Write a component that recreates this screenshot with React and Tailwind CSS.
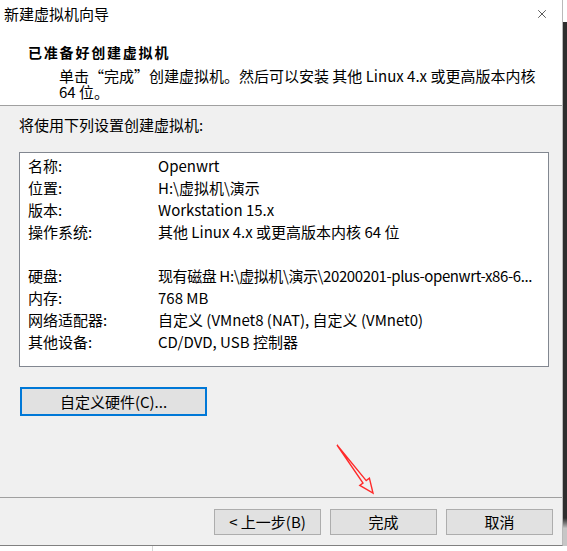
import { X } from 'lucide-react';

const rows = [
  ['名称:', 'Openwrt'],
  ['位置:', 'H:\\虚拟机\\演示'],
  ['版本:', 'Workstation 15.x'],
  ['操作系统:', '其他 Linux 4.x 或更高版本内核 64 位'],
  ['', ''],
  ['硬盘:', '现有磁盘 H:\\虚拟机\\演示\\20200201-plus-openwrt-x86-6...', true],
  ['内存:', '768 MB'],
  ['网络适配器:', '自定义 (VMnet8 (NAT), 自定义 (VMnet0)'],
  ['其他设备:', 'CD/DVD, USB 控制器'],
];

function WizardButton({ children }) {
  return (
    <button className="h-[26px] w-[107px] border border-[#adadad] bg-[#e1e1e1] text-center leading-[24px]">
      {children}
    </button>
  );
}

export default function App() {
  return (
    <div className="relative h-[551px] w-[567px] overflow-hidden bg-white font-['Noto_Sans_CJK_SC','Noto_Sans',sans-serif] text-[15px] text-black">
      <div className="flex h-[546px]">
        <div className="flex w-[563px] flex-col border-r border-b border-r-[#b9b9b9] border-b-[#808080]">
          {/* title bar + wizard header */}
          <div className="h-[106px] border-b border-[#a0a0a0] bg-white">
            <div className="flex h-[28px] items-center justify-between pl-[4px] pr-[13px]">
              <span className="leading-[20px]">新建虚拟机向导</span>
              <X size={14} strokeWidth={1.1} className="text-black" />
            </div>
            <div className="mt-[14px] pl-[28px] text-[14px] font-bold leading-[20px] tracking-[1.8px]">
              已准备好创建虚拟机
            </div>
            <div className="mt-[6px] pl-[59px] leading-[16px]">
              <div className="h-[16px]">单击“完成”创建虚拟机。然后可以安装 其他 Linux 4.x 或更高版本内核</div>
              <div className="h-[16px]">64 位。</div>
            </div>
          </div>

          {/* settings summary */}
          <div className="flex-1 bg-[#f0f0f0] pl-[19px] pr-[13px] pt-[8px]">
            <div className="leading-[22px]">将使用下列设置创建虚拟机:</div>
            <div className="mt-[16px] h-[215px] overflow-hidden border border-[#828790] bg-white pt-[2px]">
              {rows.map(([label, value, tight], i) => (
                <div key={i} className="flex h-[22px] items-center whitespace-nowrap">
                  <span className="w-[138px] shrink-0 pl-[8px]">{label}</span>
                  <span className={tight ? 'tracking-[-0.4px]' : ''}>{value}</span>
                </div>
              ))}
            </div>
            <button className="ml-[1px] mt-[20px] h-[29px] w-[187px] border-2 border-[#0078d7] bg-[#e1e1e1] text-center leading-[25px]">
              自定义硬件(C)...
            </button>
          </div>

          {/* footer buttons */}
          <div className="flex h-[48px] justify-end gap-[9px] border-t border-[#a0a0a0] bg-[#f0f0f0] pr-[9px] pt-[11px]">
            <WizardButton>&lt; 上一步(B)</WizardButton>
            <WizardButton>完成</WizardButton>
            <WizardButton>取消</WizardButton>
          </div>
        </div>

        {/* edge of the window behind */}
        <div className="flex w-[4px] flex-col">
          <div className="h-[22px] bg-white" />
          <div className="flex-1 bg-[#2e2e2e]" />
          <div className="h-[10px] bg-gradient-to-b from-[#2e2e2e] to-[#c2c2c2]" />
          <div className="h-[18px] bg-[#c6c6c6]" />
        </div>
      </div>
      <div className="h-[5px]">
        <div className="ml-[152px] h-full w-px bg-[#d6d6d6]" />
      </div>

      {/* red annotation arrow */}
      <svg className="pointer-events-none absolute left-0 top-0" width="567" height="551">
        <polygon
          points="337,445 366.2,480.6 369.4,478.2 373,493 359.8,485.4 363,483"
          fill="none"
          stroke="#ff2a2a"
          strokeWidth="1.4"
          strokeLinejoin="miter"
        />
      </svg>
    </div>
  );
}
